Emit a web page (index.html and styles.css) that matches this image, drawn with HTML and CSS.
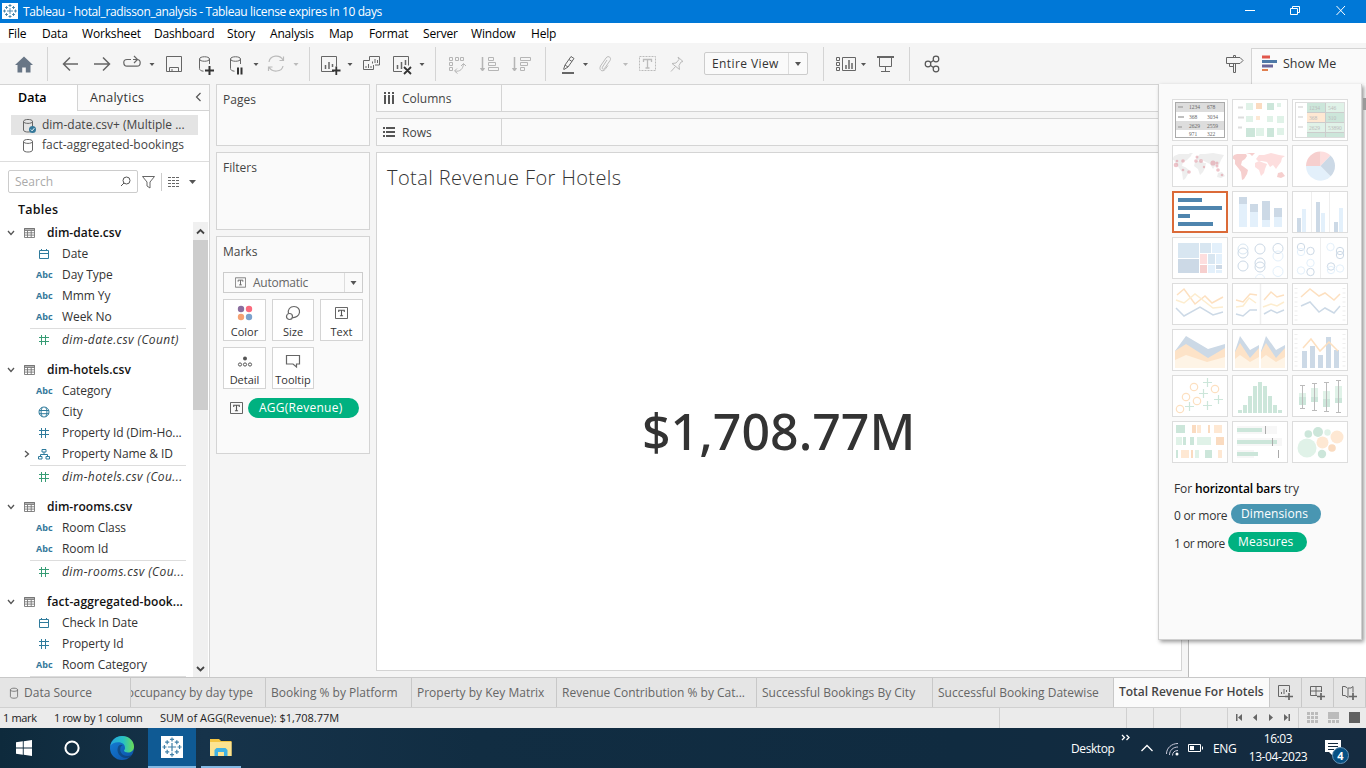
FILE: index.html
```html
<!DOCTYPE html>
<html lang="en">
<head>
<meta charset="utf-8">
<title>Tableau - hotal_radisson_analysis</title>
<link rel="stylesheet" href="styles.css">
</head>
<body>
<svg class="defs" width="0" height="0">
  <defs>
    <symbol id="caret" viewBox="0 0 6 4"><path d="M0 0h6L3 4z" fill="currentColor"/></symbol>
    <symbol id="logo" viewBox="0 0 16 16"><rect width="16" height="16" fill="#fff"/><path d="M8 5v6M5 8h6M8 1v3M6.5 2.5h3M8 12v3M6.5 13.500h3M2.500 6.500v3M1 8h3M13.500 6.500v3M12 8h3M4.500 3v3M3 4.500h3M11.500 3v3M10 4.500h3M4.500 10v3M3 11.500h3M11.500 10v3M10 11.500h3" stroke="#4382a8" stroke-width=".9" fill="none"/></symbol>
    <symbol id="cyl" viewBox="0 0 12 15"><path d="M1.500 3.500v8.500c0 2.700 9 2.700 9 0V3.500c0-2.700-9-2.700-9 0c0 2.500 9 2.500 9 0" fill="none" stroke="#666"/></symbol>
    <symbol id="table" viewBox="0 0 11 10"><path d="M.5.5h10v9H.5zM.5 2.500h10M.5 4.800h10M.5 7.100h10M3.500 2.500v7M7.200 2.500v7" fill="none" stroke="#777" stroke-width=".9"/><path d="M0 1h11" stroke="#666"/></symbol>
    <symbol id="down" viewBox="0 0 8 6"><path d="M1 1l3 3.500L7 1" fill="none" stroke="#555" stroke-width="1.300"/></symbol>
    <symbol id="date" viewBox="0 0 12 12"><path d="M1.500 2.500h9v8h-9zM1.500 5.500h9M3.500 1v2M8.500 1v2" fill="none" stroke="#2f7b9c"/></symbol>
    <symbol id="hash" viewBox="0 0 12 12"><path d="M1 3.500h10M1 7.500h10M3.500 1v10M7.500 1v10" fill="none" stroke="currentColor"/></symbol>
    <symbol id="globe" viewBox="0 0 12 12"><circle cx="6" cy="6" r="5" fill="none" stroke="#2f7b9c"/><path d="M1 4.500h10M1 7.700h10M4.200 1.500c-1.500 3-1.500 6 0 9M7.800 1.500c1.500 3 1.500 6 0 9" fill="none" stroke="#2f7b9c"/></symbol>
    <symbol id="tree" viewBox="0 0 12 12"><path d="M4 1.500h4v2.500H4zM.5 8.500h3.500V11H.5zM8 8.500h3.500V11H8zM6 4v2.500M2.500 8.500v-2h7v2" fill="none" stroke="#2f7b9c"/></symbol>
    <symbol id="tbox" viewBox="0 0 14 13"><path d="M.5.5h13v12H.5z" fill="none" stroke="currentColor"/><path d="M4 5.500V3.500h6v2M7 3.500v6M5.300 9.500h3.400" fill="none" stroke="currentColor" stroke-width="1.200"/></symbol>
    <linearGradient id="edgeA" x1="0" y1="0" x2="1" y2="0"><stop offset="0" stop-color="#25a6dd"/><stop offset=".55" stop-color="#27c1c4"/><stop offset="1" stop-color="#6bdd53"/></linearGradient>
    <linearGradient id="edgeB" x1="0" y1="0" x2="1" y2="1"><stop offset="0" stop-color="#1581d8"/><stop offset="1" stop-color="#0c4fa5"/></linearGradient>
  </defs>
</svg>

<header class="titlebar">
  <svg class="app-logo" width="16" height="16"><use href="#logo"/></svg>
  <span class="app-title">Tableau - hotal_radisson_analysis - Tableau license expires in 10 days</span>
  <svg class="win-buttons" width="126" height="23" viewBox="1240 0 126 23" fill="none" stroke="#fff"><path d="M1245 10.500h10M1290.500 8.500h7v6h-7zM1292.500 8.500v-2h7v6h-2M1336.500 6l8.500 9M1345 6l-8.500 9"/></svg>
</header>

<nav class="menubar">
  <span style="width:34px">File</span><span style="width:40px">Data</span><span style="width:72px">Worksheet</span><span style="width:73px">Dashboard</span><span style="width:43px">Story</span><span style="width:59px">Analysis</span><span style="width:40px">Map</span><span style="width:54px">Format</span><span style="width:48px">Server</span><span style="width:60px">Window</span><span>Help</span>
</nav>

<div class="toolbar">
  <div class="group" style="width:48px"><svg width="47" height="40" viewBox="0 44 47 40"><path d="M15 65l9-8.500 9 8.500h-2.500v7.500h-4.700v-5h-3.600v5h-4.700V65z" fill="#687686"/></svg></div>
  <div class="group" style="width:262px"><svg width="261" height="40" viewBox="48 44 261 40" fill="none" stroke="#666" stroke-width="1.500">
    <path d="M78 64H63.500M70 57.500L63.500 64l6.500 6.500M94 64h15M103 57.500l6.500 6.500-6.500 6.500"/>
    <path d="M131 59.500h-4c-2 0-3.200 1-3.200 3s1.200 3.700 3.200 3.700h10c2 0 3.200-1.200 3.200-3.500s-1.200-3.200-3.200-3.200h-4M134 56l3.500 3.500-3.500 3.500" stroke-width="1.200"/>
    <g stroke-width="1"><path d="M166.500 56.500h15v15h-15zM169.500 71.500v-4h9v4M172 69v2.500"/>
    <path d="M199.500 59v9.500c0 1.500 1.500 2.500 4 2.700M209.500 59v5M199.500 59c0-3 10-3 10 0s-10 3-10 0M230.500 59v9.500c0 1.500 1.500 2.500 4 2.700M240.500 59v5M230.500 59c0-3 10-3 10 0s-10 3-10 0"/></g>
    <path d="M205 70.500h9M209.500 66v9M238 67.500v7M241.500 67.500v7" stroke="#333" stroke-width="2"/>
    <g stroke="#bbb" stroke-width="1.200"><path d="M269 62c1-7 11-8 14-2M283 66c-1 6-11 7-14 1M283.500 56.500v4h-4M268.500 71v-4h4"/></g>
    <path d="M149.500 63h5l-2.500 3zM253.500 63h5l-2.500 3z" fill="#555" stroke="none"/><path d="M293.500 63h5l-2.500 3z" fill="#bbb" stroke="none"/>
  </svg></div>
  <div class="group" style="width:126px"><svg width="125" height="40" viewBox="310 44 125 40" fill="none" stroke="#666">
    <path d="M334 71.500h-12.500v-15h15v10M394.500 71.500h-1v-15h15v9M394 71.500h8"/>
    <path d="M325.500 65v4M329 62v7M332.500 64v3M397.500 65v4M401.500 62v7M405.500 60v5" stroke-width="1.500"/>
    <path d="M332 70.500h8.500M336.300 66.500v8.500M404 67l7 7M411 67l-7 7" stroke="#333" stroke-width="1.800"/>
    <path d="M371 56.500h8.500v8.500H375M369.500 60.500v-4h3M369.500 60.500h-6v9h10v-4.500M372.500 63.500v-2M375 63v-4M377.500 63v-3M366 68v-2M368.500 68v-4M371 68v-2"/>
    <path d="M347.500 63h5l-2.500 3zM419.500 63h5l-2.500 3z" fill="#555" stroke="none"/>
  </svg></div>
  <div class="group" style="width:110px"><svg width="109" height="40" viewBox="436 44 109 40" fill="none" stroke="#b5b5b5">
    <path d="M449.500 57.500h3v3h-3zM455.500 57.500h3v3h-3zM460.500 57.500h3v3h-3zM449.500 62.500h3v3h-3zM449.500 67.500h3v3h-3zM455 71c5 1 8-2 8.500-7M457 68.500l-2.500 2.500 3 2.500M461 66l2.500-2.500 2.500 2.500"/>
    <path d="M482.500 57v13M514.500 57v13" stroke-width="1.500"/><path d="M480.500 68.500h4l-2 2.500zM512.500 68.500h4l-2 2.500z" fill="#b5b5b5"/>
    <path d="M488.500 57.500h5v3h-5zM488.500 62.500h7v3h-7zM488.500 67.500h10v3h-10zM520.500 57.500h10v3h-10zM520.500 62.500h7v3h-7zM520.500 67.500h4v3h-4z"/>
  </svg></div>
  <div class="group wide" style="width:278px">
    <svg width="158" height="40" viewBox="546 44 158 40" fill="none" stroke="#666">
      <path d="M563.500 69.500l1.500-4.500 6-8.500 3 2-6 8.500-4 2.500M565 65l3 2M569 59.500l3 2"/><path d="M562 73h12" stroke-width="2"/>
      <path d="M583 63h5l-2.500 3z" fill="#555" stroke="none"/>
      <g stroke="#bbb"><path d="M607 60l-4.500 7c-1 2 1 3 2 1.500l5.500-8c2-3-2-5.500-4-2.500l-5.500 8c-2 4 2 6.500 4.500 3.500l3-4"/>
      <path d="M639.500 56.500h16v14h-16z" stroke-dasharray="2 1"/><path d="M643.500 62v-2.500h8V62M647.500 60v8M645.500 68h4" stroke-width="1.300"/>
      <path d="M678 57l5 4.500-2 .5-2 3.500.5 4-7.500-6 4-.5 3-3.500zM675.500 66.500l-4.500 5"/></g>
      <path d="M623 63h5l-2.500 3z" fill="#bbb" stroke="none"/>
    </svg>
    <div class="select"><span>Entire View</span><i><svg width="6" height="4"><use href="#caret"/></svg></i></div>
  </div>
  <div class="group" style="width:86px"><svg width="85" height="40" viewBox="824 44 85 40" fill="none" stroke="#666">
    <path d="M836.500 57.500h3v3h-3zM836.500 62.500h3v3h-3zM836.500 67.500h3v3h-3zM842.500 57.500h13v13h-13z"/><path d="M846 65v4M849 60v9M852 63v6" stroke-width="1.500"/>
    <path d="M861 63h5l-2.500 3z" fill="#555" stroke="none"/><path d="M877 57h17" stroke-width="2"/><path d="M879.500 57.500v9h12v-9M885.500 66.500v5M881 71.500h9"/>
  </svg></div>
  <svg width="40" height="40" viewBox="910 44 40 40" fill="none" stroke="#555" stroke-width="1.200"><circle cx="928" cy="64" r="2.800"/><circle cx="936" cy="59" r="2.800"/><circle cx="936" cy="69" r="2.800"/><path d="M930.500 62.500l3-2M930.500 65.500l3 2"/></svg>
  <svg class="signpost" width="26" height="40" viewBox="1221 44 26 40" fill="none" stroke="#666"><path d="M1226.500 57.500h13.500l3 3-3 3h-13.500zM1233.500 57v-1.500h2v1.500M1233.500 63.500v9h2v-9M1229.500 63.500v3h4"/></svg>
  <div class="showme-tab"><svg width="16" height="16"><path d="M0 2h8" stroke="#e1574c" stroke-width="3"/><path d="M0 6.500h15" stroke="#4e79a7" stroke-width="3"/><path d="M0 11h11" stroke="#6a6599" stroke-width="3"/><path d="M0 15h6" stroke="#e07f4f" stroke-width="2"/></svg><span>Show Me</span></div>
</div>

<main class="workspace">
  <aside class="data-pane">
    <div class="pane-tabs"><b>Data</b><span>Analytics</span><svg width="7" height="10"><path d="M5.500 1L1.500 5l4 4" fill="none" stroke="#555" stroke-width="1.200"/></svg></div>
    <div class="sources">
      <div class="source selected"><svg width="12" height="15"><use href="#cyl"/></svg><svg class="check" width="7" height="7"><circle cx="3.500" cy="3.500" r="3.500" fill="#34789a"/><path d="M1.800 3.500l1.300 1.300 2.200-2.600" stroke="#fff" fill="none"/></svg><span>dim-date.csv+ (Multiple ...</span></div>
      <div class="source"><svg width="12" height="15"><use href="#cyl"/></svg><span>fact-aggregated-bookings</span></div>
    </div>
    <div class="search-row">
      <div class="search"><span>Search</span><svg width="11" height="11" fill="none" stroke="#555"><circle cx="6.500" cy="4.500" r="3.500"/><path d="M4 7L1 10"/></svg></div>
      <svg width="54" height="18" viewBox="142 172 54 18" fill="none" stroke="#666"><path d="M142.500 175.500h12l-4.500 5.500v6l-3-2v-4z"/><path d="M161.500 172v18" stroke="#ccc"/><path d="M168 176.500h12M168 179.500h12M168 182.500h12M168 185.500h12" stroke-dasharray="3 1"/><path d="M189 179h7l-3.500 4z" fill="#555" stroke="none"/></svg>
    </div>
    <div class="tables-title">Tables</div>
    <div class="tree">
      <div class="fields">
        <div class="thead"><svg width="8" height="6"><use href="#down"/></svg><svg width="11" height="10"><use href="#table"/></svg><b>dim-date.csv</b></div>
        <div class="field"><svg width="12" height="12"><use href="#date"/></svg><span>Date</span></div>
        <div class="field"><em>Abc</em><span>Day Type</span></div>
        <div class="field"><em>Abc</em><span>Mmm Yy</span></div>
        <div class="field"><em>Abc</em><span>Week No</span></div>
        <div class="field count"><svg width="12" height="12"><use href="#hash"/></svg><span>dim-date.csv (Count)</span></div>
        <div class="thead"><svg width="8" height="6"><use href="#down"/></svg><svg width="11" height="10"><use href="#table"/></svg><b>dim-hotels.csv</b></div>
        <div class="field"><em>Abc</em><span>Category</span></div>
        <div class="field"><svg width="12" height="12"><use href="#globe"/></svg><span>City</span></div>
        <div class="field"><svg width="12" height="12"><use href="#hash"/></svg><span>Property Id (Dim-Ho...</span></div>
        <div class="field nested"><svg class="chev" width="6" height="8"><path d="M1 1l3.500 3L1 7" fill="none" stroke="#555" stroke-width="1.300"/></svg><svg width="12" height="12"><use href="#tree"/></svg><span>Property Name &amp; ID</span></div>
        <div class="field count"><svg width="12" height="12"><use href="#hash"/></svg><span>dim-hotels.csv (Cou...</span></div>
        <div class="thead"><svg width="8" height="6"><use href="#down"/></svg><svg width="11" height="10"><use href="#table"/></svg><b>dim-rooms.csv</b></div>
        <div class="field"><em>Abc</em><span>Room Class</span></div>
        <div class="field"><em>Abc</em><span>Room Id</span></div>
        <div class="field count"><svg width="12" height="12"><use href="#hash"/></svg><span>dim-rooms.csv (Cou...</span></div>
        <div class="thead"><svg width="8" height="6"><use href="#down"/></svg><svg width="11" height="10"><use href="#table"/></svg><b class="long">fact-aggregated-book...</b></div>
        <div class="field"><svg width="12" height="12"><use href="#date"/></svg><span>Check In Date</span></div>
        <div class="field"><svg width="12" height="12"><use href="#hash"/></svg><span>Property Id</span></div>
        <div class="field"><em>Abc</em><span>Room Category</span></div>
        <div class="field count"></div>
      </div>
      <div class="scroll"><svg width="15" height="17" fill="none" stroke="#444" stroke-width="1.800"><path d="M4 10.500L7.500 7l3.500 3.500"/></svg><i></i><svg class="bottom" width="15" height="17" fill="none" stroke="#444" stroke-width="1.800"><path d="M4 7l3.500 3.500L11 7"/></svg></div>
    </div>
  </aside>

  <section class="cards">
    <div class="card pages">Pages</div>
    <div class="card filters">Filters</div>
    <div class="card marks">
      <div>Marks</div>
      <div class="mark-type"><svg width="11" height="11"><use href="#tbox"/></svg><span>Automatic</span><i><svg width="7" height="4"><use href="#caret"/></svg></i></div>
      <div class="mark-grid">
        <div><svg width="16" height="16"><circle cx="4" cy="4" r="3.200" fill="#8a6d9e"/><circle cx="12" cy="4" r="3.200" fill="#fa6a7d"/><circle cx="4" cy="12" r="3.200" fill="#f5a173"/><circle cx="12" cy="12" r="3.200" fill="#7ba2cd"/></svg>Color</div>
        <div><svg width="16" height="16" fill="none" stroke="#666" stroke-width="1.200"><path d="M3.500 8.500C2.500 4.500 5 1.500 9 1.500s6 3 5.500 6-3.500 5.500-7 5"/><circle cx="4.500" cy="11.500" r="3"/></svg>Size</div>
        <div><svg class="tb mid" width="13" height="12"><use href="#tbox"/></svg>Text</div>
        <div><svg width="16" height="16" fill="none" stroke="#555"><circle cx="8" cy="5.500" r="2" fill="#555" stroke="none"/><circle cx="3" cy="11.500" r="1.600"/><circle cx="8" cy="11.500" r="1.600"/><circle cx="13" cy="11.500" r="1.600"/></svg>Detail</div>
        <div><svg width="16" height="16" fill="none" stroke="#666" stroke-width="1.200"><path d="M1.500 2.500h13v8.500h-3V14l-3.500-3H1.500z"/></svg>Tooltip</div>
      </div>
      <div class="pill-row"><svg class="tb" width="13" height="12"><use href="#tbox"/></svg><span class="pill">AGG(Revenue)</span></div>
    </div>
  </section>

  <section class="view">
    <div class="shelf"><div><svg width="12" height="12" viewBox="0 0 12 12"><path d="M2 0v2M6 0v2M10 0v2M2 3v9M6 3v9M10 3v9" stroke="#555" stroke-width="2"/></svg>Columns</div></div>
    <div class="shelf"><div><svg width="12" height="12" viewBox="0 0 12 12"><path d="M0 2h2M3 2h9M0 6h2M3 6h9M0 10h2M3 10h9" stroke="#555" stroke-width="2"/></svg>Rows</div></div>
    <div class="sheet"><h1>Total Revenue For Hotels</h1><div class="value"><span>$1,708.77M</span></div></div>
  </section>
  <div class="edge"></div>

  <section class="showme">
    <div class="charts">
      <svg width="56" height="42"><path d="M3 3h50v10H3zM3 22h50v9H3z" fill="#ddd"/><rect x="3.500" y="3.500" width="49" height="35" fill="none" stroke="#aaa"/><path d="M6 8h5M6 18h6M6 28h4" stroke="#aaa" stroke-width="1.500"/><g class="digits"><text x="17" y="10">1234</text><text x="35" y="10">678</text><text x="17" y="20">368</text><text x="35" y="20">3034</text><text x="17" y="29">2629</text><text x="35" y="29">2559</text><text x="17" y="37">971</text><text x="35" y="37">322</text></g></svg>
      <svg width="56" height="42"><path d="M6 8.500h5M6 18.500h6M6 28.500h4" stroke="#ddd" stroke-width="2"/><path d="M14 4h7v7h-7zM45 4h4v4h-4zM14 17h7v6h-7zM35 17h6v6h-6zM45 17h7v7h-7zM24 29h8v8h-8zM45 29h7v7h-7z" fill="#e0f2e8"/><path d="M35 4h7v7h-7zM14 29h9v9h-9zM35 29h7v9h-7z" fill="#cce6da"/><path d="M24 4h6v6h-6z" fill="#fadbc0"/><path d="M24 17h4v4h-4z" fill="#fde8d4"/></svg>
      <svg width="56" height="42"><path d="M15 4h38v34H15z" fill="#e0f2e8"/><path d="M15 4h18v9H15zM34 14h18v9H34zM15 34h38v4H15z" fill="#cce6da"/><path d="M15 14h18v9H15z" fill="#fee8d3"/><path d="M15 13.500h38M15 23.500h38M15 33.500h38M33.500 4v34" stroke="#ccc"/><rect x="3.500" y="3.500" width="49" height="35" fill="none" stroke="#ddd"/><path d="M6 8h5M6 18h5M6 28h5" stroke="#ddd" stroke-width="1.500"/><g class="digits faint"><text x="17" y="11">1234</text><text x="36" y="11">546</text><text x="17" y="21">368</text><text x="36" y="21">310</text><text x="17" y="31">2629</text><text x="36" y="31">53890</text></g></svg>
      <svg width="56" height="42"><g id="land"><path d="M2 11l5-2 7 0 6-1-1 3-4 4-4 2-1 4 3 1 4 3-1 4-3 5-2 1-1-8-3-4-3-4-2-4-2 0zM23 17l5-2 4 3 2 0-1 5-2 4-3 3-2-6-4-3zM24 13l4-4 5 0 8-1 11 2-3 5-2 5-4 1-2 3-3-5-4-2-4-2-5 0zM46 28l4-1 3 4-4 2-4-1zM17 8l4 0-2 2z"/></g><g fill="#e0949f" fill-opacity=".55"><circle cx="4" cy="20" r="2.300"/><circle cx="5" cy="16" r="1.300"/><circle cx="11" cy="16" r="1.800"/><circle cx="11" cy="25" r="1.300"/><circle cx="17" cy="27" r="1.800"/><circle cx="24" cy="16" r="1.800"/><circle cx="25" cy="12" r="1.500"/><circle cx="29" cy="16" r="2"/><circle cx="32" cy="22" r="1.200"/><circle cx="41" cy="18" r="2.600"/><circle cx="45" cy="18" r="1.500"/><circle cx="45" cy="21" r="1.500"/><circle cx="46" cy="25" r="1.800"/><circle cx="50" cy="30" r="1.300"/></g></svg>
      <svg width="56" height="42"><path d="M2 10l3-1 9 0 1 2-2 3-3 2-1 4 3 2 4 3-1 4-3 5-2 1-1-8-2-3-4-5 0-4-3-2z" fill="#f6cfce"/><path d="M23 18l4-2 5 2 3 1-2 5-1 4-3 3-2-6-4-3zM24 14l3-4 5 0 7-2 8 2 6 1-3 2-1 4-3 4-2 3-3-4-3 2-3-5-5-1-4 0z" fill="#fddede"/><path d="M46 28l4-1 3 4-4 2-4-1zM14 8h9l-3 3-2-2z" fill="#f6cfce"/></svg>
      <svg width="56" height="42"><path d="M28.500 21V6.500A14.500 14.500 0 0 1 38.500 10.500z" fill="#fddede"/><path d="M28.500 21V6.500A14.500 14.500 0 0 0 14 21z" fill="#f6cfce"/><path d="M28.500 21H14A14.500 14.500 0 0 0 38.700 31.300z" fill="#e3f0fb"/><path d="M28.500 21L38.500 10.500A14.500 14.500 0 0 1 38.700 31.300z" fill="#ccd9e6"/></svg>
      <svg class="picked" width="56" height="42"><path d="M6 9h24M6 17h44M6 25h12M6 33h35" stroke="#4f85ae" stroke-width="4"/></svg>
      <svg width="56" height="42"><path d="M7 7h8v29H7zM18 13h8v23h-8zM30 10h8v26h-8zM42 17h8v19h-8z" fill="#e3f0fb"/><path d="M7 6h8v7H7zM18 13h8v8h-8zM30 10h8v19h-8zM42 17h8v9h-8z" fill="#ccd9e6"/></svg>
      <svg width="56" height="42"><path d="M19.500 0v42M37.500 0v42" stroke="#eee"/><path d="M5 27h4v14H5zM24 11h4v30h-4zM42 31h4v10h-4z" fill="#ccd9e6"/><path d="M10 18h4v23h-4zM29 22h4v19h-4zM47 17h4v24h-4z" fill="#e3f0fb"/></svg>
      <svg width="56" height="42"><path d="M6 6h21v15H6zM28 6h11v10H28z" fill="#d8e6f1"/><path d="M6 22h21v14H6zM44 28h6v4h-6z" fill="#ccd9e6"/><path d="M40 6h10v10H40zM44 17h6v10h-6zM36 28h7v8h-7zM44 33h6v3h-6z" fill="#e3f0fb"/><path d="M28 17h7v10h-7z" fill="#fddede"/><path d="M28 28h7v8h-7z" fill="#f6cfce"/><path d="M36 17h7v10h-7z" fill="#d8e6f1"/></svg>
      <svg width="56" height="42" fill="none" stroke="#ccd9e6"><circle cx="11" cy="12" r="5" stroke="#d8e6f1"/><circle cx="11" cy="16" r="5"/><circle cx="11" cy="29" r="5"/><circle cx="28" cy="12" r="5"/><circle cx="28" cy="26" r="5"/><circle cx="28" cy="30" r="5"/><circle cx="46" cy="11.500" r="5"/><g stroke="#e3f0fb"><circle cx="46" cy="19" r="5"/><circle cx="46" cy="34.500" r="5"/><path d="M23.500 41c1-5 8-5 9 0"/></g></svg>
      <svg width="56" height="42" fill="none" stroke="#ccd9e6"><path d="M28.500 0v42" stroke="#eee"/><circle cx="9" cy="10" r="3.700"/><circle cx="18.500" cy="14" r="3.700"/><circle cx="18.500" cy="35" r="3.700"/><circle cx="48" cy="14" r="3.700"/><circle cx="48" cy="18" r="3.700"/><circle cx="39" cy="29.500" r="3.700"/><g stroke="#e3f0fb"><circle cx="9" cy="15" r="3.700"/><circle cx="9" cy="33.500" r="3.700"/><circle cx="18.500" cy="26" r="3.700"/><circle cx="38.500" cy="10" r="3.700"/><circle cx="48" cy="31.500" r="3.700"/><circle cx="39" cy="33" r="3.700"/></g></svg>
      <svg width="56" height="42" fill="none" stroke-width="1.500"><path d="M5 12l7-6 11 15 10-8 7 7 11-6" stroke="#fde0c0"/><path d="M4 17l8 3 11-9 9 7 9 7 10-1" stroke="#fdedcf"/><path d="M4 25l8 8 16-9 13 8 10-3" stroke="#ccd9e6"/></svg>
      <svg width="56" height="42" fill="none" stroke-width="1.500"><path d="M28.500 0v42" stroke="#eee"/><path d="M4 17l7 2 7-8 7 1M32 17l7-8 6 5 7-2" stroke="#fde0c0"/><path d="M4 24l7-1 6-8 7 5M31 24l8-3 6 2 7-4" stroke="#fdedcf"/><path d="M4 31l7 2 7-6 7 0M32 31l7-4 6 3 7-3" stroke="#ccd9e6"/></svg>
      <svg width="56" height="42" fill="none" stroke-width="1.500"><path d="M4 5v34M52 5v34" stroke="#eee" stroke-width="3" stroke-dasharray="1 3.500"/><path d="M9 14l9-8 9 7 6-3 9 7 6-6" stroke="#fde0c0"/><path d="M9 23l9-4 9 10 6-4 9 5 6-7" stroke="#ccd9e6"/></svg>
      <svg width="56" height="42"><path d="M3 22L14 7l22 13 17-5v24H3z" fill="#ccd9e6"/><path d="M3 22l11-7 22 14 17-10v20H3z" fill="#fde3c8"/><path d="M3 31l11-5 21 7 18-5v11H3z" fill="#fef4e6"/></svg>
      <svg width="56" height="42"><path d="M3 22L8 7l10 14 9-5v23H3zM29 22l5-15 10 14 9-5v23H29z" fill="#ccd9e6"/><path d="M3 23l5-9 10 15 9-10v20H3zM29 23l5-9 10 15 9-10v20H29z" fill="#fde3c8"/><path d="M3 30l5-4 10 7 9-5v11H3zM29 30l5-4 10 7 9-5v11H29z" fill="#fef4e6"/></svg>
      <svg width="56" height="42"><path d="M4 5v34M52 5v34" stroke="#eee" stroke-width="3" stroke-dasharray="1 3.500"/><path d="M10 22h5v17h-5zM18 17h5v22h-5zM26 26h5v13h-5zM34 8h5v31h-5zM42 21h5v18h-5z" fill="#ccd9e6"/><path d="M11 19l8-9 9 12 9-9 9 9" fill="none" stroke="#fde0c0" stroke-width="1.500"/></svg>
      <svg width="56" height="42" fill="none" stroke-width="1.200"><g stroke="#fde0c0"><circle cx="22" cy="12" r="3.700"/><circle cx="43" cy="14" r="3.700"/><circle cx="14" cy="22" r="3.700"/><circle cx="25" cy="26" r="3.700"/><circle cx="8" cy="34" r="3.700"/></g><path d="M31 7.500h9M35.500 3v9M27 18.500h9M31.500 14v9M42 24.500h9M46.500 20v9M31 30.500h9M35.500 26v9M13 31.500h9M17.500 27v9" stroke="#cce6da"/></svg>
      <svg width="56" height="42"><path d="M6 35h4v3H6zM11 30h4v8h-4zM16 21h4v17h-4zM21 11h4v27h-4zM26 7h4v31h-4zM31 11h4v27h-4zM36 21h4v17h-4zM41 30h4v8h-4zM46 35h4v3h-4z" fill="#cce6da"/></svg>
      <svg width="56" height="42"><path d="M7 18h7v12H7zM19 13h7v14h-7zM31 16h7v16h-7zM43 11h7v17h-7z" fill="#e0f2e8"/><path d="M7 22h7v8H7zM19 22h7v5h-7zM31 24h7v8h-7zM43 23h7v5h-7z" fill="#cce6da"/><path d="M10.500 10v24M8 10.500h5M8 33.500h5M22.500 8v28M20 8.500h5M20 35.500h5M34.500 7v30M32 7.500h5M32 36.500h5M46.500 5v33M44 5.500h5M44 37.500h5" stroke="#bbb"/></svg>
      <svg width="56" height="42"><path d="M4 4h9v8H4zM11 16h3v8h-3zM18 16h4v8h-4zM4 29h2v8H4zM33 29h7v8h-7z" fill="#cce6da"/><path d="M20 4h4v8h-4zM36 4h2v8h-2zM44 16h8v8h-8zM19 29h2v8h-2z" fill="#fadbc0"/><path d="M25 4h4v8h-4zM42 4h8v8h-8zM9 29h8v8H9zM46 29h4v8h-4z" fill="#fee8d3"/><path d="M4 16h6v8H4zM25 16h14v8H25zM23 29h4v8h-4z" fill="#e0f2e8"/></svg>
      <svg width="56" height="42"><path d="M5 5h40v8H5zM5 17h45v8H5zM5 29h17v8H5z" fill="#f7f7f7"/><path d="M5 9h25M5 21h40M5 33h21" stroke="#cce6da" stroke-width="4"/><path d="M33.500 5v8M40.500 17v8M46.500 29v8" stroke="#aaa"/></svg>
      <svg width="56" height="42"><g fill="#e0f2e8"><circle cx="15" cy="27" r="9.500"/><circle cx="35.500" cy="11.500" r="3.200"/></g><g fill="#cce6da"><circle cx="16.300" cy="13" r="3.800"/><circle cx="26" cy="11" r="5"/><circle cx="30" cy="33" r="4.200"/></g><g fill="#fee8d3"><circle cx="45" cy="16" r="6.500"/><circle cx="30.500" cy="21.500" r="6"/></g><circle cx="40" cy="27" r="3.800" fill="#fadbc0"/></svg>
    </div>
    <p class="hint">For <b>horizontal bars</b> try</p>
    <div class="need"><span>0 or more</span><span class="pill blue">Dimensions</span></div>
    <div class="need second"><span>1 or more</span><span class="pill">Measures</span></div>
  </section>
  <div class="far-edge"></div>
</main>

<nav class="sheet-tabs">
  <div class="source-tab" style="width:131px"><svg width="10" height="12" viewBox="0 0 12 15"><use href="#cyl"/></svg><span>Data Source</span></div>
  <div class="cut" style="width:135px"><span>occupancy by day type</span></div>
  <div style="width:146px"><span>Booking % by Platform</span></div>
  <div style="width:145px"><span>Property by Key Matrix</span></div>
  <div style="width:200px"><span>Revenue Contribution % by Cat...</span></div>
  <div style="width:176px"><span>Successful Bookings By City</span></div>
  <div style="width:181px"><span>Successful Booking Datewise</span></div>
  <div class="active" style="width:156px"><span>Total Revenue For Hotels</span></div>
  <div class="add"><svg width="16" height="15" fill="none" stroke="#666"><path d="M7 11.500H.5V.5h11V7M3.500 9V7M6 9V4M8.500 7V5"/><path d="M7 11.500h8M11 8v7" stroke-width="1.700"/></svg></div>
  <div class="add"><svg width="16" height="15" fill="none" stroke="#666"><path d="M7 10.500H.5V1.500h11V7M.5 6h11M6 1.500v9"/><path d="M7 11.500h8M11 8v7" stroke-width="1.700"/></svg></div>
  <div class="add"><svg width="16" height="15" fill="none" stroke="#666"><path d="M5.500 3L3 1.500H.5v9h2.500l3 2V3h3l2-1.500v6"/><path d="M7 11.500h8M11 8v7" stroke-width="1.700"/></svg></div>
</nav>

<footer class="status">
  <span class="tight" style="width:51px">1 mark</span><span class="tight" style="width:106px">1 row by 1 column</span><span class="sum">SUM of AGG(Revenue): $1,708.77M</span>
  <svg width="367" height="20" viewBox="999 708 367 20" fill="#666"><path d="M999.500 708v20M1126.500 708v20M1153.500 708v20M1180.500 708v20M1227.500 708v20M1298.500 708v20" stroke="#d0d0d0"/><path d="M1236 714h1.500v7h-1.500zM1242 714v7l-4-3.500zM1257 714v7l-4-3.500zM1269 714v7l4-3.500zM1284 714v7l4-3.500zM1288.500 714h1.500v7h-1.500z"/><path d="M1307 713.500h11M1307 717.500h11M1307 721.500h11" stroke="#bbb" stroke-width="3" stroke-dasharray="3 1"/><path d="M1328 712h11v7h-11z" fill="#bbb"/><path d="M1328 721.500h11" stroke="#bbb" stroke-width="3" stroke-dasharray="3 1"/><path d="M1349 712h11v11h-11z" fill="#606060"/></svg>
</footer>

<footer class="taskbar">
  <div class="launch"><svg width="16" height="16"><path d="M0 2.300l6.800-1v6.200H0zM7.700 1.200L16 0v7.500H7.700zM0 8.400h6.800v6.300L0 13.800zM7.700 8.400H16V16l-8.300-1.200z" fill="#fff"/></svg></div>
  <div class="launch"><svg width="18" height="18"><circle cx="9" cy="9" r="6.600" fill="none" stroke="#fff" stroke-width="2"/></svg></div>
  <div class="launch edge-app"><svg width="24" height="24"><circle cx="12" cy="12" r="12" fill="url(#edgeB)"/><path d="M.2 10C1.500 4 6.300 0 12 0c7 0 12 5 12 10.500 0 4-3 6-6 6-2.500 0-4-.8-4-2 0-.7 1-1 1-2.600C15 8 11.500 6.300 8 6.300 4.500 6.300 1.500 8 .2 10z" fill="url(#edgeA)"/><path d="M8 11c-2 5 2 11 8 11 3 0 5-1.500 6-3-8 3-13-2-11.500-7.500.5-1.500 1.500-2 2.500-2-2-1.500-4-.5-5 1.500z" fill="#0e2c4a" opacity=".45"/></svg></div>
  <div class="launch current"><svg width="22" height="22"><use href="#logo"/></svg></div>
  <div class="launch open"><svg width="22" height="19"><path d="M0 1h9l2 2h10.500v15H0z" fill="#f4c542"/><path d="M0 4h21.500v14H0z" fill="#fce391"/><path d="M4.500 18v-6l2-2h9l2 2v6H14v-4H8v4z" fill="#3fb1e3"/></svg></div>
  <span class="desk">Desktop</span>
  <svg class="tray" width="85" height="40" viewBox="1120 728 85 40" fill="none" stroke="#fff"><path d="M1122 735l2.500 2.500-2.500 2.500M1126.500 735l2.500 2.500-2.500 2.500" stroke-width="1.300"/><path d="M1141.500 751l5.500-5.500 5.500 5.500" stroke-width="1.300"/><path d="M1166.500 754c0-6 5-10.500 11.500-10.500M1169.500 755c0-5 4-8 8.500-8M1172.500 755.500c0-3 2-5 5.500-5" stroke="#ccd"/><circle cx="1177" cy="754" r="1.500" fill="#fff" stroke="none"/><path d="M1188.500 744.500h12v7h-12zM1202.500 746.500v3"/><path d="M1190 746h4v4h-4z" fill="#fff" stroke="none"/></svg>
  <span class="lang">ENG</span>
  <div class="clock"><span>16:03</span><span>13-04-2023</span></div>
  <div class="notice"><svg width="16" height="17"><path d="M0 0h16v12H8v4l-4-4H0z" fill="#fff"/><path d="M3 3.500h10M3 6.500h10M3 9.500h6" stroke="#12293d"/></svg><b>4</b></div>
</footer>
</body>
</html>
```

FILE: styles.css
```css
* { box-sizing: border-box; }
body { margin: 0; width: 1366px; height: 768px; overflow: hidden; display: flex; flex-direction: column; background: #f5f5f5; font: 12px "Open Sans", "Noto Sans", sans-serif; color: #333; white-space: nowrap; }
svg { display: block; flex: none; overflow: visible; }
.defs { position: absolute; }
i, em { font-style: normal; }

.titlebar { height: 23px; flex: none; background: #0078d7; display: flex; align-items: center; padding-left: 2px; color: #fff; }
.app-logo { margin-top: -2px; }
.app-title { margin-left: 5px; font-size: 12px; letter-spacing: -.37px; }
.win-buttons { margin-left: auto; }

.menubar { height: 20px; flex: none; display: flex; align-items: center; background: #fff; color: #000; padding-left: 8px; letter-spacing: -.17px; }
.menubar span { flex: none; }

.toolbar { height: 41px; padding-top: 1px; flex: none; display: flex; }
.group { flex: none; display: flex; background: linear-gradient(#d4d4d4, #d4d4d4) right 3px / 1px 34px no-repeat; }
.select { width: 104px; height: 23px; margin-top: 8px; border: 1px solid #ccc; border-radius: 2px; background: #fafafa; display: flex; align-items: center; color: #333; letter-spacing: .4px; }
.select span { flex: 1; padding-left: 7px; }
.select i { width: 19px; height: 21px; border-left: 1px solid #ddd; display: grid; place-items: center; color: #555; }
.signpost { margin-left: auto; }
.showme-tab { width: 115px; height: 36px; margin: 4px 0 0 4px; border-left: 1px solid #d4d4d4; border-top: 1px solid #d4d4d4; background: #fafafa; display: flex; align-items: center; padding: 0 0 7px 10px; gap: 5px; font-size: 12.5px; }

.workspace { height: 593px; flex: none; display: flex; position: relative; }
.data-pane { width: 210px; flex: none; background: #fff; border-right: 1px solid #d4d4d4; border-top: 1px solid #d4d4d4; display: flex; flex-direction: column; }
.pane-tabs { height: 26px; flex: none; display: flex; align-items: center; font-size: 12.5px; background: linear-gradient(90deg, #fff 77px, #fafafa 77px); }
.pane-tabs b { width: 78px; height: 26px; padding: 4px 0 0 18px; border-right: 1px solid #d4d4d4; font-weight: 600; color: #000; }
.pane-tabs span { flex: 1; height: 26px; padding: 4px 0 0 12px; border-bottom: 1px solid #d4d4d4; letter-spacing: .3px; }
.pane-tabs svg { width: 14px; height: 26px; padding: 7px 0; border-bottom: 1px solid #d4d4d4; }
.sources { height: 51px; flex: none; padding: 4px 11px 0; border-bottom: 1px solid #ddd; }
.source { height: 20px; display: flex; align-items: center; padding-left: 11px; position: relative; color: #444; font-size: 12px; }
.source span { margin: -1px 0 0 8px; }
.selected { background: #e4e4e4; }
.check { position: absolute; left: 18px; top: 11px; }
.search-row { height: 39px; flex: none; display: flex; align-items: center; padding: 0 0 0 8px; gap: 4px; }
.search { width: 130px; height: 23px; border: 1px solid #ccc; border-radius: 2px; display: flex; align-items: center; justify-content: space-between; padding: 0 6px 0 6px; color: #aaa; }
.tables-title { height: 21px; flex: none; padding-left: 18px; font-size: 12.5px; line-height: 17px; font-weight: 600; color: #111; letter-spacing: .25px; }
.tree { flex: 1; min-height: 0; display: flex; }
.fields { width: 193px; overflow: hidden; padding-right: 7px; }
.thead { height: 21px; display: flex; align-items: center; padding-left: 7px; color: #111; }
.thead svg { margin-top: 1px; }
.thead svg + svg { margin-left: 9px; }
.thead b { margin-left: 12px; font-weight: 600; letter-spacing: .03px; }
.thead .long { letter-spacing: .1px; }
.count + .thead { margin-top: 9px; }
.field { height: 21px; display: flex; align-items: center; padding-left: 38px; color: #333; position: relative; }
.field svg { color: #2f7b9c; }
.field span { margin-left: 12px; letter-spacing: -.08px; }
.field em { width: 24px; margin-left: -2px; font: bold 9px "Open Sans", sans-serif; color: #34789a; }
.field em + span { margin-left: 2px; }
.nested .chev { margin: 0 8px 0 -14px; }
.count { height: 22px; margin: 1px 0 0 30px; padding: 0 0 0 8px; border-top: 1px solid #ddd; font-style: italic; }
.count span { letter-spacing: .42px; }
.count svg { color: #369c74; }
.scroll { width: 15px; padding-top: 1px; background: #f0f0f0; display: flex; flex-direction: column; }
.scroll i { height: 170px; background: #cdcdcd; flex: none; }
.scroll .bottom { margin-top: auto; }

.cards { width: 154px; margin-left: 6px; flex: none; display: flex; flex-direction: column; gap: 6px; color: #444; }
.card { background: #fafafa; border: 1px solid #d4d4d4; padding: 6px 6px 0; }
.pages { height: 62px; }
.filters { height: 78px; }
.marks { height: 218px; }
.mark-type { margin-top: 12px; width: 140px; height: 21px; border: 1px solid #ccc; display: flex; align-items: center; padding-left: 11px; color: #666; }
.mark-type span { flex: 1; padding-left: 7px; letter-spacing: -.25px; }
.mark-type i { width: 18px; height: 19px; border-left: 1px solid #ddd; display: grid; place-items: center; color: #555; }
.mark-grid { display: grid; grid-template-columns: 43px 42px 43px; grid-auto-rows: 42px; gap: 6px; margin-top: 6px; font-size: 11px; color: #333; }
.mark-grid div { border: 1px solid #d4d4d4; background: #fff; display: flex; flex-direction: column; align-items: center; justify-content: space-between; padding: 5px 0 1px; }
.tb { color: #555; }
.mid { margin-top: 2px; }
.pill-row { display: flex; align-items: center; gap: 5px; margin: 9px 0 0 7px; }
.pill { width: 111px; height: 20px; border-radius: 10px; background: #00b180; color: #fff; line-height: 19px; padding-left: 11px; font-weight: 500; letter-spacing: .25px; }

.view { width: 806px; margin-left: 6px; flex: none; display: flex; flex-direction: column; }
.shelf { height: 28px; margin-bottom: 6px; background: #fafafa; border: 1px solid #d4d4d4; border-right: 0; }
.shelf div { width: 125px; height: 26px; border-right: 1px solid #d4d4d4; display: flex; align-items: center; gap: 7px; padding-left: 6px; color: #444; }
.sheet { height: 519px; background: #fff; border: 1px solid #d4d4d4; display: flex; flex-direction: column; }
h1 { margin: 9px 0 0 10px; font: 300 20px/32px "Open Sans", sans-serif; letter-spacing: .42px; color: #333; }
.value { font: 500 50px "Noto Sans", sans-serif; color: #333; padding: 203px 0 0 265px; }
.edge { flex: 1; margin-left: 6px; background: #fff; border-left: 1px solid #bbb; }

.showme { position: absolute; left: 1158px; top: 0; width: 204px; height: 556px; background: #fafafa; border: 1px solid #d0d0d0; border-top: 0; box-shadow: 2px 2px 4px rgba(0,0,0,.4); padding: 15px 0 0 13px; }
.charts { display: grid; grid-template-columns: repeat(3, 56px); gap: 4px; }
.charts svg { background: #fff; outline: 1px solid #ddd; outline-offset: -1px; overflow: hidden; }
.charts .picked { outline: 2px solid #db6a38; outline-offset: -2px; }
#land { fill: #eee; }
.digits { font: 5.500px "Liberation Serif", serif; fill: #666; }
.faint { fill: #bbb; }
.hint { margin: 17px 0 0 2px; line-height: 17px; letter-spacing: -.12px; }
.hint b { font-weight: 600; color: #000; }
.need { display: flex; height: 20px; margin: 7px 0 0 2px; }
.need span:first-child { width: 57px; padding-top: 3px; letter-spacing: -.2px; }
.second { margin-top: 8px; }
.second span:first-child { width: 54px; letter-spacing: -.5px; }
.need .pill { width: 79px; padding-left: 10px; line-height: 19px; letter-spacing: .1px; }
.need .blue { width: 90px; background: #4996b2; }
.far-edge { position: absolute; left: 1363px; top: 14px; width: 3px; height: 12px; background: #999; }

.sheet-tabs { height: 31px; flex: none; display: flex; background: #e5e5e5; border-top: 1px solid #c8c8c8; border-bottom: 1px solid #d0d0d0; color: #666; }
.sheet-tabs div { flex: none; border-right: 1px solid #c8c8c8; display: flex; align-items: center; padding-left: 5px; overflow: hidden; }
.sheet-tabs .source-tab { padding-left: 9px; gap: 5px; }
.sheet-tabs .cut { justify-content: flex-end; padding: 0 12px 0 0; }
.sheet-tabs .active { background: #fafafa; font-weight: 600; color: #444; padding-bottom: 2px; }
.sheet-tabs .add { width: 32px; padding-left: 8px; }

.status { height: 20px; flex: none; display: flex; align-items: center; background: #ebebeb; color: #222; font-size: 11px; padding-left: 3px; }
.status span { padding-bottom: 2px; }
.tight { letter-spacing: -.35px; }
.sum { flex: 1; }

.taskbar { height: 40px; flex: none; display: flex; align-items: center; background: linear-gradient(90deg, #0e2a3c, #16334a 15%, #112d42 35%, #102b40 70%, #152b40); color: #fff; }
.launch { width: 48px; height: 40px; display: grid; place-items: center; }
.edge-app { width: 52px; }
.current { background: #0f5a94; border-bottom: 2px solid #83b9e4; }
.open { width: 40px; margin-left: 5px; border-bottom: 2px solid #83b9e4; }
.desk { margin-left: 830px; width: 49px; letter-spacing: -.4px; }
.lang { margin-left: 8px; width: 29px; letter-spacing: -.3px; }
.clock { width: 72px; display: flex; flex-direction: column; align-items: center; line-height: 18px; letter-spacing: -.4px; }
.notice { position: relative; margin-left: 11px; }
.notice b { position: absolute; left: 7px; top: 7px; width: 17px; height: 17px; border: 1px solid #6793b5; border-radius: 50%; background: #075083; font-size: 11px; line-height: 15px; text-align: center; }
```
